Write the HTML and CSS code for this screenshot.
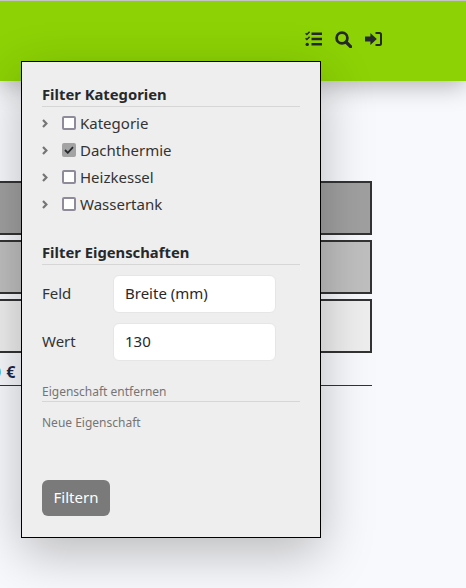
FILE: index.html
```html
<!DOCTYPE html>
<html lang="de">
<head>
    <title>Filter</title>
    <meta name="viewport" content="width=device-width, initial-scale=1">
    <link rel="stylesheet" href="styles.css">
</head>
<body>
    <header class="topbar">
        <div class="topbar-icons">
            <svg class="icon" width="17" height="16" viewBox="0 0 17 16">
                <path d="M.6 2.2l1.3 1.3L4.6.8M.6 7.2l1.3 1.3L4.6 5.8" fill="none" stroke="#26292c" stroke-width="1.5"/>
                <circle cx="2.2" cy="13.4" r="1.7" fill="#26292c"/>
                <path d="M6.5 1.5H17v2.6H6.5zM6.5 6.7H17v2.6H6.5zM6.5 12H17v2.6H6.5z" fill="#26292c"/>
            </svg>
            <svg class="icon" width="17" height="17" viewBox="0 0 17 17">
                <circle cx="7" cy="7" r="5.4" fill="none" stroke="#26292c" stroke-width="2.8"/>
                <path d="M11 11l4.6 4.6" fill="none" stroke="#26292c" stroke-width="3.2" stroke-linecap="round"/>
            </svg>
            <svg class="icon" width="17" height="14" viewBox="0 0 17 14">
                <path d="M0 4.4h5.4V1l6.4 6-6.4 6V9.6H0z" fill="#26292c"/>
                <path d="M10.5 1H14.5q1.5 0 1.5 1.5v9q0 1.5-1.5 1.5H10.5" fill="none" stroke="#26292c" stroke-width="2"/>
            </svg>
        </div>
    </header>

    <main class="content">
        <div class="result-row row-dark"></div>
        <div class="result-row row-mid"></div>
        <div class="result-row row-light"></div>
        <div class="price-row"><span class="price-num">50</span> <span class="price-cur">€</span></div>
    </main>

    <div class="filter-popup">
        <h3 class="section-title">Filter Kategorien</h3>
        <ul class="cat-list">
            <li class="cat-item">
                <svg class="chevron" width="6" height="9" viewBox="0 0 6 9"><path d="M1 1l3.4 3.5L1 8" fill="none" stroke="#757575" stroke-width="2.2"/></svg>
                <input type="checkbox" class="cat-check"><span>Kategorie</span>
            </li>
            <li class="cat-item">
                <svg class="chevron" width="6" height="9" viewBox="0 0 6 9"><path d="M1 1l3.4 3.5L1 8" fill="none" stroke="#757575" stroke-width="2.2"/></svg>
                <span class="cat-check is-checked">
                    <svg width="10" height="8" viewBox="0 0 10 8"><path d="M1 4l2.8 2.8L9 1.2" fill="none" stroke="#26292c" stroke-width="1.8"/></svg>
                </span><span>Dachthermie</span>
            </li>
            <li class="cat-item">
                <svg class="chevron" width="6" height="9" viewBox="0 0 6 9"><path d="M1 1l3.4 3.5L1 8" fill="none" stroke="#757575" stroke-width="2.2"/></svg>
                <input type="checkbox" class="cat-check"><span>Heizkessel</span>
            </li>
            <li class="cat-item">
                <svg class="chevron" width="6" height="9" viewBox="0 0 6 9"><path d="M1 1l3.4 3.5L1 8" fill="none" stroke="#757575" stroke-width="2.2"/></svg>
                <input type="checkbox" class="cat-check"><span>Wassertank</span>
            </li>
        </ul>

        <h3 class="section-title props-title">Filter Eigenschaften</h3>
        <div class="field-row">
            <label class="field-label">Feld</label>
            <input class="field-input" type="text" value="Breite (mm)">
        </div>
        <div class="field-row">
            <label class="field-label">Wert</label>
            <input class="field-input" type="text" value="130">
        </div>

        <div class="link-remove">Eigenschaft entfernen</div>
        <div class="link-new">Neue Eigenschaft</div>

        <button class="filter-btn">Filtern</button>
    </div>
</body>
</html>
```

FILE: styles.css
```css
* { box-sizing: border-box; }
html, body { height: 100%; }
body {
    margin: 0;
    background: #f8f9fc;
    color: #26292c;
    font-family: "Noto Sans", "Open Sans", sans-serif;
    overflow: hidden;
}
.topbar {
    height: 81px;
    background: #8cd205;
    border-top: 1px solid #c4c4c4;
    box-shadow: 0 4px 24px rgba(0, 0, 0, 0.3);
    display: flex;
    justify-content: flex-end;
    padding: 29px 84px 0 0;
}
.topbar-icons { display: flex; align-items: center; gap: 13px; height: 18px; }

.content { width: 392px; margin-left: -20px; padding-top: 100px; }
.result-row {
    height: 54px;
    margin-bottom: 5px;
    border: 2px solid #333;
}
.row-dark { background: #a0a0a0; }
.row-mid { background: #bfbfbf; }
.row-light { background: #eee; }
.price-row {
    height: 25px;
    margin-top: 8px;
    border-bottom: 1px solid #333;
    font-size: 16px;
    font-weight: 700;
    line-height: 22px;
    white-space: nowrap;
}
.price-num { display: inline-block; width: 21px; margin-right: 1px; text-align: right; color: #0a58ca; }
.price-cur { color: #1c2b4a; }

.filter-popup {
    position: absolute;
    left: 21px;
    top: 61px;
    width: 300px;
    height: 477px;
    padding: 24px 20px 0;
    background: #eee;
    border: 1px solid #000;
    box-shadow: 0 16px 48px rgba(0, 0, 0, 0.25);
}
.section-title {
    margin: 0;
    height: 21px;
    font-size: 14.8px;
    line-height: 17px;
    font-weight: 700;
    color: #26292c;
    border-bottom: 1px solid #d6d6d6;
}
.cat-list { list-style: none; margin: 2px 0 0; padding: 0; }
.cat-item {
    display: flex;
    align-items: center;
    height: 27px;
    font-size: 15px;
    color: #333;
}
.chevron { margin: 2px 14px 0 0; flex: none; }
.cat-check {
    appearance: none;
    display: flex;
    align-items: center;
    justify-content: center;
    width: 14px;
    height: 14px;
    margin: 1px 4px 0 0;
    background: #fff;
    border: 2px solid #8f8b9b;
    border-radius: 2px;
    flex: none;
}
.cat-check.is-checked { background: #a3a3a3; border-color: #a3a3a3; }

.props-title { margin-top: 27px; margin-bottom: 10px; }
.field-row {
    display: flex;
    align-items: center;
    height: 38px;
    margin-bottom: 10px;
}
.field-label { width: 71px; padding-bottom: 2px; font-size: 15px; color: #333; }
.field-input {
    width: 163px;
    height: 38px;
    padding: 0 11px 2px;
    background: #fff;
    border: 1px solid #e6e6e6;
    border-radius: 6px;
    font: 15px "Noto Sans", "Open Sans", sans-serif;
    color: #26292c;
}
.link-remove {
    margin-top: 22px;
    height: 19px;
    font-size: 12px;
    line-height: 17px;
    color: #757575;
    border-bottom: 1px solid #d6d6d6;
}
.link-new {
    margin-top: 12px;
    font-size: 12px;
    line-height: 17px;
    color: #757575;
}
.filter-btn {
    display: block;
    margin-top: 49px;
    width: 68px;
    height: 36px;
    padding: 0 0 2px;
    background: #7a7a7a;
    color: #fff;
    border: none;
    border-radius: 6px;
    font: 15px "Noto Sans", "Open Sans", sans-serif;
}
```
